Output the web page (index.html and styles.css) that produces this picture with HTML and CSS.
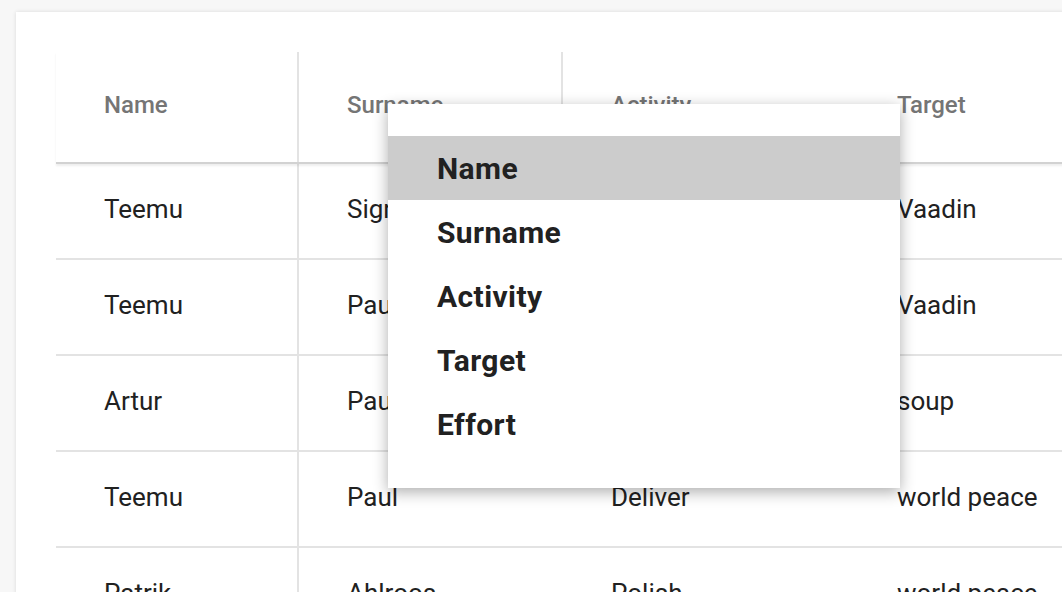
FILE: index.html
```html
<!DOCTYPE html>
<html>
<head>
<meta charset="utf-8">
<link rel="stylesheet" href="styles.css">
</head>
<body>
<div class="card">
  <div class="grid">
    <div class="row head">
      <div class="cell c1">Name</div>
      <div class="cell c2">Surname</div>
      <div class="cell c3">Activity</div>
      <div class="cell c4">Target</div>
    </div>
    <div class="row">
      <div class="cell c1">Teemu</div>
      <div class="cell c2">Signell</div>
      <div class="cell c3">Develop</div>
      <div class="cell c4">Vaadin</div>
    </div>
    <div class="row">
      <div class="cell c1">Teemu</div>
      <div class="cell c2">Paul</div>
      <div class="cell c3">Improve</div>
      <div class="cell c4">Vaadin</div>
    </div>
    <div class="row">
      <div class="cell c1">Artur</div>
      <div class="cell c2">Paul</div>
      <div class="cell c3">Cook</div>
      <div class="cell c4">soup</div>
    </div>
    <div class="row">
      <div class="cell c1">Teemu</div>
      <div class="cell c2">Paul</div>
      <div class="cell c3">Deliver</div>
      <div class="cell c4">world peace</div>
    </div>
    <div class="row">
      <div class="cell c1">Patrik</div>
      <div class="cell c2">Ahlroos</div>
      <div class="cell c3">Polish</div>
      <div class="cell c4">world peace</div>
    </div>
  </div>
</div>
<div class="menu">
  <div class="item selected">Name</div>
  <div class="item">Surname</div>
  <div class="item">Activity</div>
  <div class="item">Target</div>
  <div class="item">Effort</div>
</div>
</body>
</html>
```

FILE: styles.css
```css
html, body {
  margin: 0;
  padding: 0;
  height: 100%;
  overflow: hidden;
}
body {
  background: #f7f7f7;
  font-family: Roboto, "Liberation Sans", sans-serif;
  padding: 12px 0 0 16px;
  box-sizing: border-box;
  position: relative;
}
.card {
  width: 1100px;
  height: 700px;
  background: #fff;
  box-shadow: 0 0 4px rgba(0, 0, 0, 0.12);
  padding: 40px 0 0 40px;
  box-sizing: border-box;
}
.grid {
  display: flex;
  flex-direction: column;
}
.row {
  display: grid;
  grid-template-columns: 243px 264px 286px 1fr;
  height: 96px;
  border-bottom: 2px solid #e3e3e3;
  box-sizing: border-box;
}
.row.head {
  height: 112px;
  border-bottom: 2px solid #d2d2d2;
  box-shadow: 0 2px 2px rgba(0, 0, 0, 0.07);
  position: relative;
  z-index: 1;
}
.cell {
  display: flex;
  align-items: center;
  padding-left: 48px;
  padding-bottom: 4px;
  font-size: 26px;
  color: #212121;
  box-sizing: border-box;
  white-space: nowrap;
  overflow: hidden;
}
.head .cell {
  font-size: 24px;
  font-weight: 500;
  color: #757575;
  padding-bottom: 4px;
}
.c1 {
  border-right: 2px solid #e3e3e3;
}
.head .c2 {
  border-right: 2px solid #e3e3e3;
}
.menu {
  position: absolute;
  left: 388px;
  top: 104px;
  width: 512px;
  height: 384px;
  background: #fff;
  padding: 32px 0;
  box-sizing: border-box;
  box-shadow: 0 4px 14px rgba(0, 0, 0, 0.32);
  z-index: 5;
}
.item {
  height: 64px;
  display: flex;
  align-items: center;
  padding-left: 49px;
  font-size: 30px;
  letter-spacing: 0.4px;
  font-weight: 700;
  color: #212121;
}
.item.selected {
  background: #cccccc;
}
```
